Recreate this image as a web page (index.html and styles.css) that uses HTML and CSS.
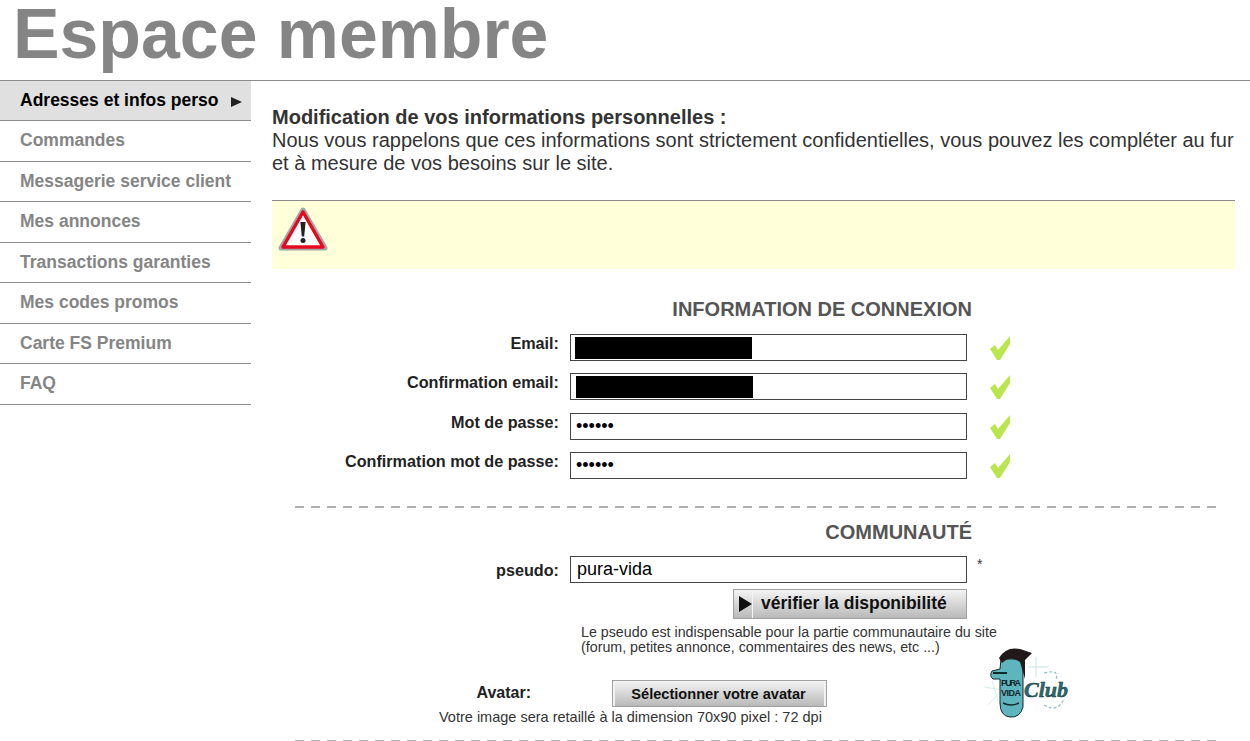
FILE: index.html
```html
<!DOCTYPE html>
<html lang="fr">
<head>
    <meta charset="UTF-8">
    <title>Espace membre</title>
    <link rel="stylesheet" href="styles.css">
</head>
<body>
    <header class="page-header">
        <h1>Espace membre</h1>
    </header>

    <div class="layout">
        <nav class="side-menu">
            <a class="active" href="#">Adresses et infos perso <span class="arrow"></span></a>
            <a href="#">Commandes</a>
            <a href="#">Messagerie service client</a>
            <a href="#">Mes annonces</a>
            <a href="#">Transactions garanties</a>
            <a href="#">Mes codes promos</a>
            <a href="#">Carte FS Premium</a>
            <a href="#">FAQ</a>
        </nav>

        <main class="content">
            <p class="intro">
                <strong>Modification de vos informations personnelles :</strong><br>
                Nous vous rappelons que ces informations sont strictement confidentielles, vous pouvez les compléter au fur et à mesure de vos besoins sur le site.
            </p>

            <div class="warning">
                <svg width="50" height="46" viewBox="0 0 50 46">
                    <path d="M25 4 L47 42 H3 Z" fill="#fff" stroke="#a5a5a5" stroke-width="5" stroke-linejoin="round"/>
                    <path d="M25 6 L45 41 H5 Z" fill="#fff" stroke="#e30b20" stroke-width="3.4" stroke-linejoin="round"/>
                    <path d="M22.4 16 H27.6 L26.2 30.5 H23.8 Z" fill="#222"/>
                    <circle cx="25" cy="34.6" r="2.5" fill="#222"/>
                </svg>
            </div>

            <h2 class="section-title first">INFORMATION DE CONNEXION</h2>

            <div class="field">
                <label>Email:</label>
                <div class="input-wrap">
                    <input type="text">
                    <span class="redacted"></span>
                </div>
                <svg class="check" width="22" height="26" viewBox="0 0 22 26"><path d="M0 14 L5 10 L8 15 L20 1 L20 9 L10 25 L7 25 Z" fill="#b9e64e"/></svg>
            </div>
            <div class="field">
                <label>Confirmation email:</label>
                <div class="input-wrap">
                    <input type="text">
                    <span class="redacted shifted"></span>
                </div>
                <svg class="check" width="22" height="26" viewBox="0 0 22 26"><path d="M0 14 L5 10 L8 15 L20 1 L20 9 L10 25 L7 25 Z" fill="#b9e64e"/></svg>
            </div>
            <div class="field">
                <label>Mot de passe:</label>
                <div class="input-wrap">
                    <input type="password" value="123456">
                </div>
                <svg class="check" width="22" height="26" viewBox="0 0 22 26"><path d="M0 14 L5 10 L8 15 L20 1 L20 9 L10 25 L7 25 Z" fill="#b9e64e"/></svg>
            </div>
            <div class="field">
                <label>Confirmation mot de passe:</label>
                <div class="input-wrap">
                    <input type="password" value="123456">
                </div>
                <svg class="check" width="22" height="26" viewBox="0 0 22 26"><path d="M0 14 L5 10 L8 15 L20 1 L20 9 L10 25 L7 25 Z" fill="#b9e64e"/></svg>
            </div>

            <hr class="dashed">

            <h2 class="section-title">COMMUNAUTÉ</h2>

            <div class="field pseudo">
                <label>pseudo:</label>
                <div class="input-wrap">
                    <input type="text" value="pura-vida">
                </div>
                <span class="required">*</span>
            </div>

            <div class="verify-row">
                <button class="btn verify" type="button"><span class="btn-icon"></span>vérifier la disponibilité</button>
            </div>

            <div class="avatar-block">
                <p class="pseudo-note">Le pseudo est indispensable pour la partie communautaire du site<br>(forum, petites annonce, commentaires des news, etc ...)</p>

                <div class="avatar-row">
                    <span class="avatar-label">Avatar:</span>
                    <button class="btn select" type="button">Sélectionner votre avatar</button>
                </div>
                <p class="avatar-note">Votre image sera retaillé à la dimension 70x90 pixel : 72 dpi</p>

                <svg class="avatar-img" width="96" height="84" viewBox="0 0 96 84">
                    <path d="M2 44 L20 47 L6 62 M10 38 L16 58" fill="none" stroke="#d5eef0" stroke-width="1"/>
                    <path d="M46 24 H66 M54 14 V34" stroke="#c6e4e8" stroke-width="1" fill="none"/>
                    <path d="M62 30 q16 -4 12 6 M62 62 q14 8 20 -6" stroke="#8fc0c5" stroke-width="1.2" fill="none" stroke-dasharray="3 2"/>
                    <path d="M19 16 L18 26 L10 28 Q7 33 11 36 L18 36 L18 60 Q18 73 28 74 Q38 75 41 64 L41 16 Z" fill="#5fb5bd" stroke="#12282c" stroke-width="1"/>
                    <path d="M17 15 Q24 3 38 6 L50 10 L43 17 L43 36 L38 19 Q28 12 20 20 Z" fill="#221a1a"/>
                    <path d="M11 30 H25" stroke="#12282c" stroke-width="2" fill="none"/>
                    <text class="avatar-tiny" x="19" y="43" textLength="20">PURA</text>
                    <text class="avatar-tiny" x="19" y="53" textLength="20">VIDA</text>
                    <path d="M21 60 Q29 64 37 60" stroke="#12282c" stroke-width="1.5" fill="none"/>
                    <text class="avatar-club" x="42" y="54">Club</text>
                </svg>
            </div>

            <hr class="dashed last">
        </main>
    </div>
</body>
</html>
```

FILE: styles.css
```css
* {
    box-sizing: border-box;
    margin: 0;
    padding: 0;
}

html, body {
    height: 741px;
    overflow: hidden;
}

body {
    font-family: 'Liberation Sans', Arial, sans-serif;
    background: #fff;
    color: #333;
}

.page-header {
    height: 81px;
    border-bottom: 1px solid #8c8c8c;
    padding-left: 13px;
}

h1 {
    font-size: 69.8px;
    line-height: 68px;
    font-weight: bold;
    color: #858585;
}

.layout {
    display: flex;
}

/* left menu */
.side-menu {
    width: 251px;
    flex-shrink: 0;
}

.side-menu a {
    display: flex;
    align-items: center;
    height: 41px;
    padding-left: 20px;
    padding-bottom: 2px;
    border-bottom: 1px solid #8c8c8c;
    font-size: 17.5px;
    font-weight: bold;
    color: #858585;
    text-decoration: none;
}

.side-menu a:nth-child(odd) {
    height: 40px;
    padding-bottom: 0;
}

.side-menu a.active {
    background: #e0e0e0;
    color: #000;
}

.arrow {
    width: 0;
    height: 0;
    margin-left: 13px;
    margin-top: 3px;
    border-left: 11px solid #222;
    border-top: 5px solid transparent;
    border-bottom: 5px solid transparent;
}

/* main column */
.content {
    width: 963px;
    margin-left: 21px;
}

.intro {
    margin-top: 25px;
    font-size: 20px;
    line-height: 23px;
    color: #333;
}

.warning {
    height: 69px;
    margin-top: 25px;
    padding: 5px 0 0 6px;
    border-top: 1px solid #8c8c8c;
    background: #ffffd9;
}

.section-title {
    padding-right: 263px;
    text-align: right;
    font-size: 20px;
    line-height: 24px;
    font-weight: bold;
    color: #555;
}

.section-title.first {
    margin-top: 28px;
    margin-bottom: 13px;
}

.field {
    display: flex;
    align-items: flex-start;
    height: 27px;
    margin-bottom: 12.4px;
}

.field label {
    width: 287px;
    margin-right: 1px;
    text-align: right;
    font-size: 16.2px;
    line-height: 18px;
    font-weight: bold;
    color: #222;
}

.input-wrap {
    position: relative;
    width: 397px;
    margin-left: 10px;
}

.input-wrap input {
    display: block;
    width: 100%;
    height: 27px;
    padding: 0 6px 1px;
    border: 1px solid #444;
    font-family: 'Liberation Sans', Arial, sans-serif;
    font-size: 18px;
    color: #000;
    background: #fff;
    outline: none;
}

.input-wrap input[type="password"] {
    padding: 0 5px;
}

.redacted {
    position: absolute;
    left: 5px;
    top: 3px;
    width: 177px;
    height: 22px;
    background: #000;
}

.redacted.shifted {
    left: 6px;
}

.check {
    margin-left: 23px;
    margin-top: 1px;
}

.dashed {
    width: 921px;
    height: 2px;
    margin-left: 23px;
    margin-top: 27px;
    border: 0;
    background: repeating-linear-gradient(90deg, #b0b0b0 0, #b0b0b0 9px, transparent 9px, transparent 16px);
}

.dashed + .section-title {
    margin-top: 12px;
    margin-bottom: 12px;
}

.field.pseudo label {
    padding-top: 5px;
}

.required {
    margin-left: 10px;
    font-size: 14px;
    line-height: 16px;
    color: #333;
}

.field.pseudo {
    margin-bottom: 6px;
}

.btn {
    border: 1px solid #a0a0a0;
    background: linear-gradient(#f4f4f4, #b9b9b9);
    font-family: 'Liberation Sans', Arial, sans-serif;
    font-weight: bold;
    color: #111;
    cursor: pointer;
}

.verify-row {
    display: flex;
    justify-content: flex-end;
    width: 695px;
}

.verify {
    display: flex;
    align-items: center;
    width: 234px;
    height: 30px;
    padding: 0 0 2px;
    font-size: 17.5px;
}

.btn-icon {
    display: flex;
    align-items: center;
    width: 19px;
    height: 28px;
    margin-right: 8px;
    margin-bottom: -2px;
    padding-left: 5px;
    border-right: 1px solid #f4f4f4;
}

.btn-icon::before {
    content: "";
    width: 0;
    height: 0;
    border-left: 13px solid #111;
    border-top: 8px solid transparent;
    border-bottom: 8px solid transparent;
}

.avatar-block {
    position: relative;
    height: 121px;
}

.pseudo-note {
    padding: 6px 0 0 309px;
    font-size: 14.25px;
    line-height: 15px;
    color: #333;
}

.avatar-row {
    display: flex;
    align-items: center;
    height: 27px;
    margin-top: 25px;
}

.avatar-label {
    width: 259px;
    padding-bottom: 1px;
    text-align: right;
    font-size: 16px;
    font-weight: bold;
    color: #222;
}

.select {
    width: 215px;
    height: 27px;
    margin-left: 81px;
    padding: 0 2px 0 0;
    font-size: 14.6px;
    box-shadow: inset 2px 0 #f2f2f2, inset -2px 0 #f2f2f2;
}

.avatar-note {
    padding-left: 167px;
    margin-top: 2px;
    font-size: 14.5px;
    line-height: 16px;
    color: #333;
}

/* avatar picture sits beside the text, over the block */
.avatar-img {
    position: absolute;
    left: 710px;
    top: 24px;
}

.avatar-tiny {
    font-family: 'Liberation Sans', Arial, sans-serif;
    font-size: 9px;
    font-weight: bold;
    fill: #12282c;
}

.avatar-club {
    font-family: 'Liberation Serif', serif;
    font-size: 22px;
    font-style: italic;
    font-weight: bold;
    fill: #2a6a70;
    stroke: #16383c;
    stroke-width: 0.5px;
}

.dashed.last {
    margin-top: 0;
}
```
